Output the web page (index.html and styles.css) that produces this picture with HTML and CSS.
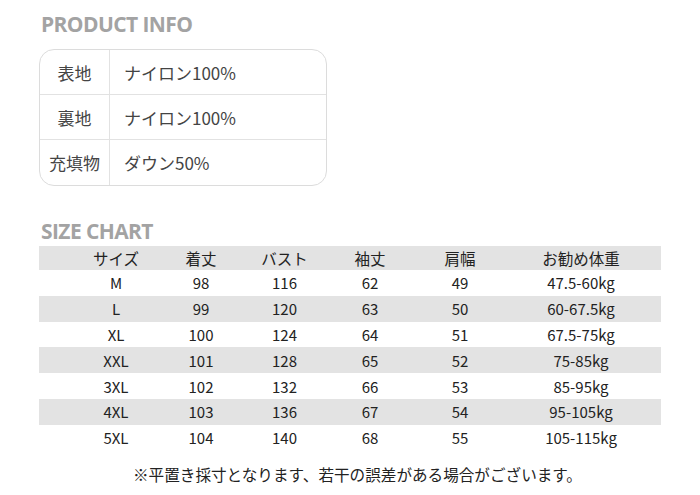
FILE: index.html
```html
<!DOCTYPE html>
<html lang="ja">
<head>
<meta charset="utf-8">
<link rel="stylesheet" href="styles.css">
</head>
<body>
<div class="page">
  <h2 class="title title-info">PRODUCT INFO</h2>
  <div class="info">
    <div class="info-row"><div class="info-label">表地</div><div class="info-value">ナイロン100%</div></div>
    <div class="info-row"><div class="info-label">裏地</div><div class="info-value">ナイロン100%</div></div>
    <div class="info-row"><div class="info-label">充填物</div><div class="info-value">ダウン50%</div></div>
  </div>
  <h2 class="title title-size">SIZE CHART</h2>
  <div class="chart">
    <div class="row head"><span>サイズ</span><span>着丈</span><span>バスト</span><span>袖丈</span><span>肩幅</span><span>お勧め体重</span></div>
    <div class="row"><span>M</span><span>98</span><span>116</span><span>62</span><span>49</span><span>47.5-60kg</span></div>
    <div class="row band"><span>L</span><span>99</span><span>120</span><span>63</span><span>50</span><span>60-67.5kg</span></div>
    <div class="row"><span>XL</span><span>100</span><span>124</span><span>64</span><span>51</span><span>67.5-75kg</span></div>
    <div class="row band"><span>XXL</span><span>101</span><span>128</span><span>65</span><span>52</span><span>75-85kg</span></div>
    <div class="row"><span>3XL</span><span>102</span><span>132</span><span>66</span><span>53</span><span>85-95kg</span></div>
    <div class="row band"><span>4XL</span><span>103</span><span>136</span><span>67</span><span>54</span><span>95-105kg</span></div>
    <div class="row"><span>5XL</span><span>104</span><span>140</span><span>68</span><span>55</span><span>105-115kg</span></div>
  </div>
  <p class="note">※平置き採寸となります、若干の誤差がある場合がございます。</p>
</div>
</body>
</html>
```

FILE: styles.css
```css
html, body {
  margin: 0;
  padding: 0;
  background: #ffffff;
}
.page {
  width: 700px;
  height: 495px;
  overflow: hidden;
  font-family: "Noto Sans CJK JP", "Noto Sans", sans-serif;
  color: #333;
}
.title {
  margin: 0;
  font-family: "Open Sans", "Noto Sans", sans-serif;
  font-weight: 700;
  font-size: 21px;
  line-height: 24px;
  color: #a3a3a3;
  letter-spacing: -0.6px;
  padding-left: 41px;
}
.title-info {
  padding-top: 12px;
}
.info {
  margin: 13px 0 0 39px;
  width: 286px;
  border: 1px solid #dcdcdc;
  border-radius: 15px;
  overflow: hidden;
}
.info-row {
  display: flex;
  height: 44px;
  align-items: stretch;
}
.info-row + .info-row {
  border-top: 1px solid #e2e2e2;
}
.info-row:last-child {
  height: 45px;
}
.info-label {
  width: 69px;
  border-right: 1px solid #e2e2e2;
  display: flex;
  align-items: center;
  justify-content: center;
  font-size: 17px;
  color: #444;
}
.info-value {
  display: flex;
  align-items: center;
  padding-left: 14px;
  font-size: 17px;
  color: #444;
}
.title-size {
  padding-top: 33px;
}
.chart {
  margin: 3px 0 0 39px;
  width: 622px;
}
.row {
  display: grid;
  grid-template-columns: 86px 84px 83px 88px 92px 150px;
  padding-left: 34px;
  height: 25.8px;
  align-items: center;
  font-size: 15px;
  color: #222;
}
.row span {
  text-align: center;
  line-height: 25px;
}
.head span {
  font-size: 15.5px;
}
.head, .band {
  background: #e3e3e3;
}
.head {
  height: 24px;
}
.note {
  margin: 12px 0 0 133px;
  font-size: 15.6px;
  color: #222;
  line-height: 22px;
}
```
